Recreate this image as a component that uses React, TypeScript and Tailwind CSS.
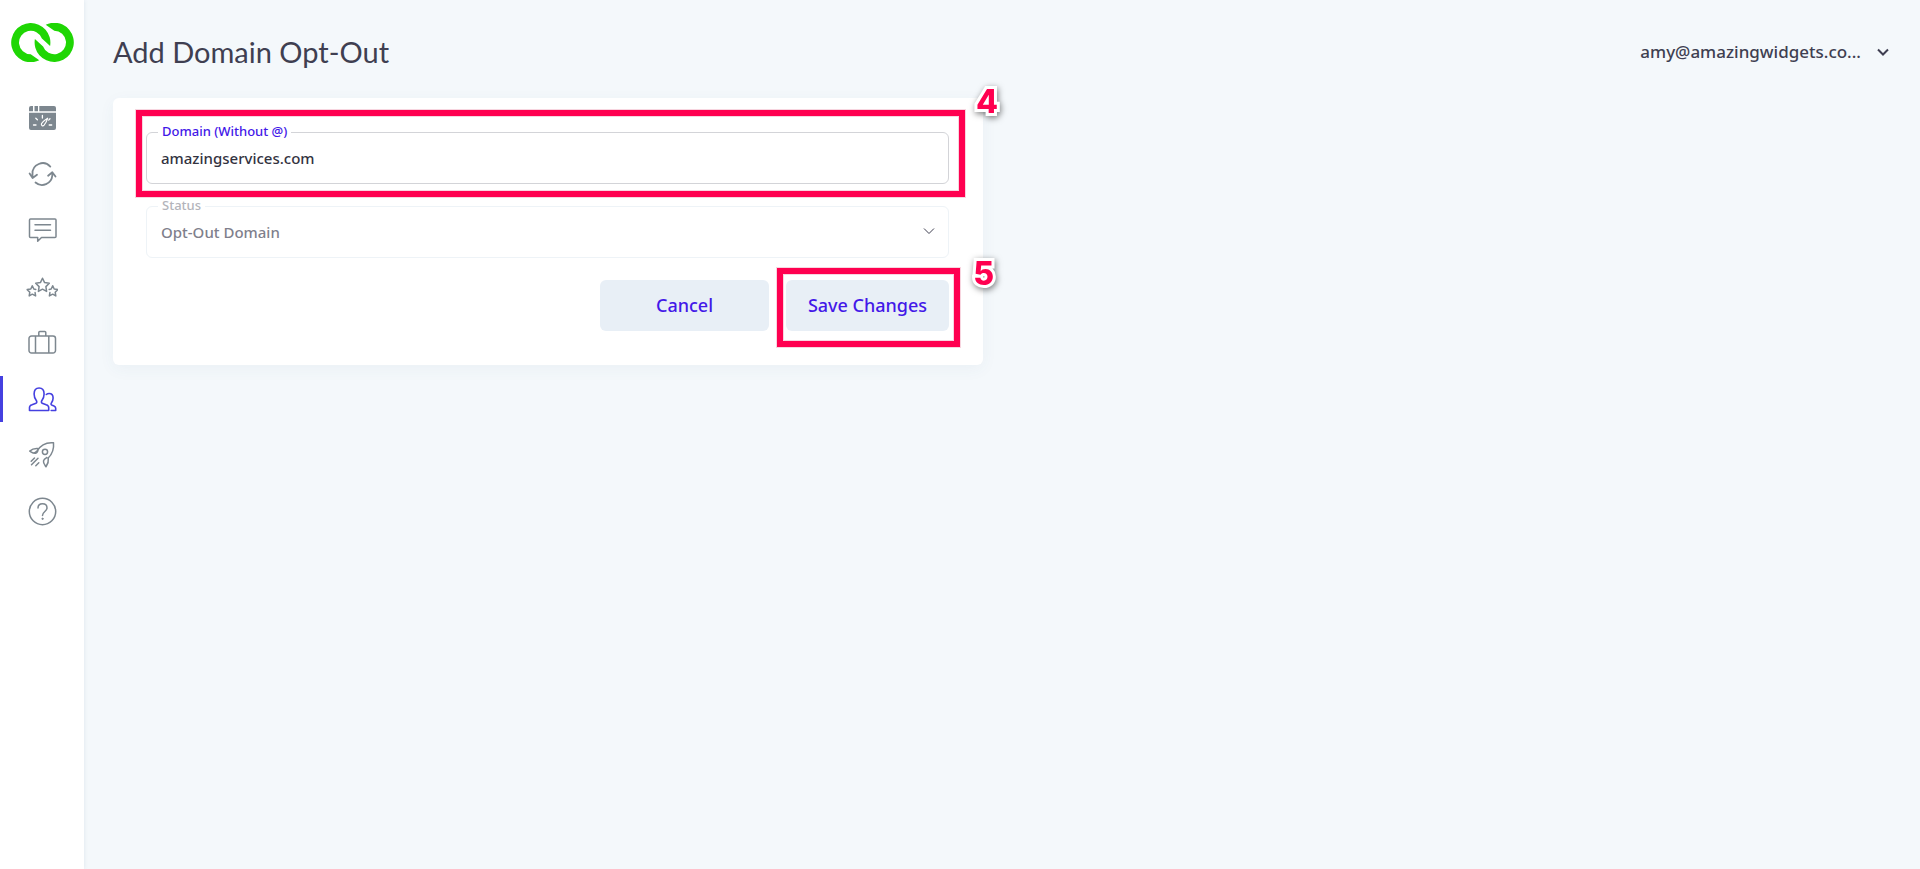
import { useState, type ReactNode } from "react";

interface NavItem {
  label: string;
  active?: boolean;
  icon: ReactNode;
}

const navItems: NavItem[] = [
  {
    label: "Dashboard",
    icon: (
      <>
        <path
          d="M5 3h2v5.200H3V5a2 2 0 0 1 2-2ZM8.500 3h3.500v5.200H8.500ZM13.300 3h14.700a2 2 0 0 1 2 2v3.200H13.300ZM3 9.700h27v15.300a2 2 0 0 1-2 2H5a2 2 0 0 1-2-2Z"
          fill="currentColor"
          stroke="none"
        />
        <path
          d="M7.500 22h2.500M23.200 22h2.500M9.800 15.200l1.600 1.600M16.400 12.400v2.600M24 15.800l-1.300 1.300"
          stroke="#fff"
          strokeWidth="1.3"
        />
        <path
          d="M21.700 15.200c-3.400 2.200-5.600 4-6.200 5.600-.6 1.800 1.300 2.800 2.600 1.400 1.400-1.600 2.700-4 3.600-7Z"
          fill="currentColor"
          stroke="#fff"
          strokeWidth="1.200"
        />
      </>
    ),
  },
  {
    label: "Sync",
    icon: (
      <path
        d="M24.300 7.600A10.200 10.200 0 0 0 6.500 15v3.500M3.600 14.500l3 4.500 4.400-3.300M9.500 23.500A10.200 10.200 0 0 0 26.300 16.500V13.500M29.500 17.500l-3.200-4.300-4.200 3.500"
        strokeWidth="1.8"
      />
    ),
  },
  {
    label: "Messages",
    icon: (
      <path d="M4.500 4h24.500a1 1 0 0 1 1 1v16.500a1 1 0 0 1-1 1H15.500l-3.800 3.800V22.500H4.500a1 1 0 0 1-1-1V5a1 1 0 0 1 1-1ZM9 9.700h15.500M9 15.200h15.500" />
    ),
  },
  {
    label: "Reviews",
    icon: (
      <>
        <path
          d="M0-6.800L2.100-2.400L6.800-1.700L3.400 1.600L4.100 6.400L0 4.200L-4.100 6.400L-3.400 1.600L-6.800-1.700L-2.100-2.400Z"
          transform="translate(16.500 14)"
        />
        <path d="M9.800 18.400l-2-.4-1.500-3.300-1.500 3.300-3.600.6 2.600 2.600-.6 3.700 3.100-1.700 3.300 1.700-.5-3.300" />
        <path d="M23.200 18.400l2-.4 1.500-3.300 1.500 3.300 3.600.6-2.600 2.600.6 3.700-3.100-1.700-3.300 1.700.5-3.300" />
      </>
    ),
  },
  {
    label: "Business",
    icon: (
      <path d="M5.500 9h21.500a2.500 2.500 0 0 1 2.500 2.500v12a2.500 2.500 0 0 1-2.500 2.500H5.500A2.500 2.500 0 0 1 3 23.500V11.500a2.500 2.500 0 0 1 2.500-2.500ZM9.500 9v17M22.800 9v17M12.800 9V5.500a1 1 0 0 1 1-1h5a1 1 0 0 1 1 1v3.500" />
    ),
  },
  {
    label: "Contacts",
    active: true,
    icon: (
      <path
        d="M3.500 27.500v-3c0-1.500 1-2.300 2.500-2.800l4-1.500c1-.4 1-1.700.3-2.700-1.200-1.600-2.200-3.500-2.200-6.500 0-4 2-6 5-6s5 2 5 6c0 3-1 4.900-2.200 6.500-.7 1-.7 2.300.3 2.700l4 1.500c1.500.5 2.500 1.300 2.500 2.800v3ZM20.300 11.500c.8-.7 1.700-1 2.800-1 2.500 0 4 1.700 4 4.500 0 2.200-.7 3.700-1.700 5-.6.8-.5 1.600.3 2l2.300.9c1.200.5 1.700 1.200 1.700 2.300v2.300h-4.500"
        strokeWidth="1.6"
      />
    ),
  },
  {
    label: "Campaigns",
    icon: (
      <>
        <path d="M27.500 3.800c-8-.8-13 2.500-16.500 8.200-1.500 1.700-2.200 2-3.500 2.300M27.500 3.800c.8 7.500-1.500 11.500-5.500 15.500M11.500 9.500c-2.800-.2-5.500.6-7.800 2.600 1.800 1 3.500 2.700 6 2.200 1.500-.5 1.800-1.500 2.300-2.800M22.300 19.500c.5 3.500-.7 6-2.300 8.300-1.300-1.800-3-3.500-2.500-6 .4-1.700 1.700-2.400 3.300-3.300" />
        <circle cx="19" cy="12.800" r="2.600" />
        <path d="M8.500 19l-3.300 3.300M12 19.300l-6.500 6.500M12.800 23.800l-3 3" />
      </>
    ),
  },
  {
    label: "Help",
    icon: (
      <>
        <circle cx="16.500" cy="16.500" r="13.200" />
        <path d="M12 13c0-2.600 1.900-4.300 4.500-4.300s4.500 1.700 4.500 4.200c0 3.600-4.500 3.600-4.500 7.600" />
        <circle cx="16.500" cy="23.800" r=".7" fill="currentColor" strokeWidth=".8" />
      </>
    ),
  },
];

function Logo() {
  const ring =
    "M28.300 37.300A19.600 19.600 0 1 1 39.100 23L30.900 15.500A11.800 11.800 0 1 0 19.700 31.300Z";
  return (
    <svg viewBox="0 0 63 39" className="h-[39px] w-[63px]" fill="#1fd604" aria-hidden="true">
      <path d={ring} />
      <path d={ring} transform="rotate(180 31.500 19.500)" />
    </svg>
  );
}

function Sidebar() {
  return (
    <aside className="w-[84px] shrink-0 bg-white pt-[23px] shadow-[0_0_4px_rgba(60,90,130,0.12)]">
      <a href="#" aria-label="Home" className="flex justify-center">
        <Logo />
      </a>
      <ul className="mt-[34px] flex flex-col gap-[10px]">
        {navItems.map((item) => (
          <li key={item.label}>
            <a
              href="#"
              aria-label={item.label}
              className={`flex h-[46px] items-center justify-center border-l-[3px] pr-[3px] ${
                item.active
                  ? "border-[#4540e0] text-[#4540e0]"
                  : "border-transparent text-[#7d878f]"
              }`}
            >
              <svg
                viewBox="0 0 32 32"
                className="size-8"
                fill="none"
                stroke="currentColor"
                strokeWidth="1.5"
                strokeLinecap="round"
                strokeLinejoin="round"
                aria-hidden="true"
              >
                {item.icon}
              </svg>
            </a>
          </li>
        ))}
      </ul>
    </aside>
  );
}

function Chevron({ className }: { className: string }) {
  return (
    <svg viewBox="0 0 12 8" className={className} fill="none" stroke="currentColor" aria-hidden="true">
      <path d="M1 1.500l5 5 5-5" />
    </svg>
  );
}

// Red outline with a step number, laid over the control it points at
function Callout({ step, className, stepClassName }: { step: number; className: string; stepClassName: string }) {
  return (
    <div
      className={`pointer-events-none absolute z-10 border-[6px] border-[#ff0050] shadow-[0_0_0_1px_#f7d5df,inset_0_0_0_1px_#f7d5df] ${className}`}
    >
      <span
        className={`absolute font-['Inter',sans-serif] text-[32px] leading-8 font-extrabold text-[#ff0050] [-webkit-text-stroke:6px_white] [paint-order:stroke_fill] drop-shadow-[1px_2px_3px_rgba(0,0,0,0.5)] ${stepClassName}`}
      >
        {step}
      </span>
    </div>
  );
}

export default function App() {
  const [domain, setDomain] = useState("amazingservices.com");

  return (
    <div className="flex min-h-screen bg-[#f4f8fb] font-['Noto_Sans',sans-serif] text-[#3f3f51]">
      <Sidebar />

      <div className="flex-1 px-[29px]">
        {/* Header */}
        <header className="flex h-[98px] items-center justify-between pt-[5px]">
          <h1 className="font-['Lato',sans-serif] text-[29px]">Add Domain Opt-Out</h1>
          <button type="button" className="flex items-center gap-4 pr-0.5 text-[17px] font-medium">
            amy@amazingwidgets.co...
            <Chevron className="h-2 w-3 stroke-2" />
          </button>
        </header>

        {/* Form */}
        <form
          className="w-full max-w-[870px] rounded-md bg-white py-[34px] pr-[34px] pl-[33px] shadow-[0_4px_16px_rgba(60,90,130,0.05)]"
          onSubmit={(e) => e.preventDefault()}
        >
          <div className="relative">
            <label
              htmlFor="domain"
              className="absolute -top-[11px] left-3 bg-white px-1 text-[13px] leading-5 font-medium text-[#4318e8]"
            >
              Domain (Without @)
            </label>
            <input
              id="domain"
              type="text"
              value={domain}
              onChange={(e) => setDomain(e.target.value)}
              className="block h-[52px] w-full rounded-md border border-[#d3d4d8] px-[14px] text-[15px] font-medium text-[#33333f] outline-none"
            />
            <Callout
              step={4}
              className="-top-[22px] -right-4 -bottom-[13px] -left-[10px]"
              stepClassName="-top-[30px] -right-[39px]"
            />
          </div>

          <div className="relative mt-[22px]">
            <label
              htmlFor="status"
              className="absolute -top-[11px] left-3 bg-white px-1 text-[13px] leading-5 font-medium text-[#b3b4bb]"
            >
              Status
            </label>
            <select
              id="status"
              disabled
              className="block h-[52px] w-full appearance-none rounded-md border border-[#eef3f7] px-[14px] text-[15px] font-medium text-[#7f7f8c] opacity-100"
            >
              <option>Opt-Out Domain</option>
            </select>
            <Chevron className="absolute top-[21px] right-[14px] h-2 w-3" />
          </div>

          <div className="mt-[22px] flex justify-end gap-[17px]">
            <button
              type="button"
              className="h-[51px] w-[169px] rounded-md bg-[#e8eff6] pb-0.5 text-lg font-medium text-[#4318e8]"
            >
              Cancel
            </button>
            <div className="relative">
              <button
                type="submit"
                className="h-[51px] w-[163px] rounded-md bg-[#e8eff6] pb-0.5 text-lg font-medium text-[#4318e8]"
              >
                Save Changes
              </button>
              <Callout
                step={5}
                className="-top-3 -right-[11px] -bottom-4 -left-[9px]"
                stepClassName="-top-[16px] -right-[40px]"
              />
            </div>
          </div>
        </form>
      </div>
    </div>
  );
}
